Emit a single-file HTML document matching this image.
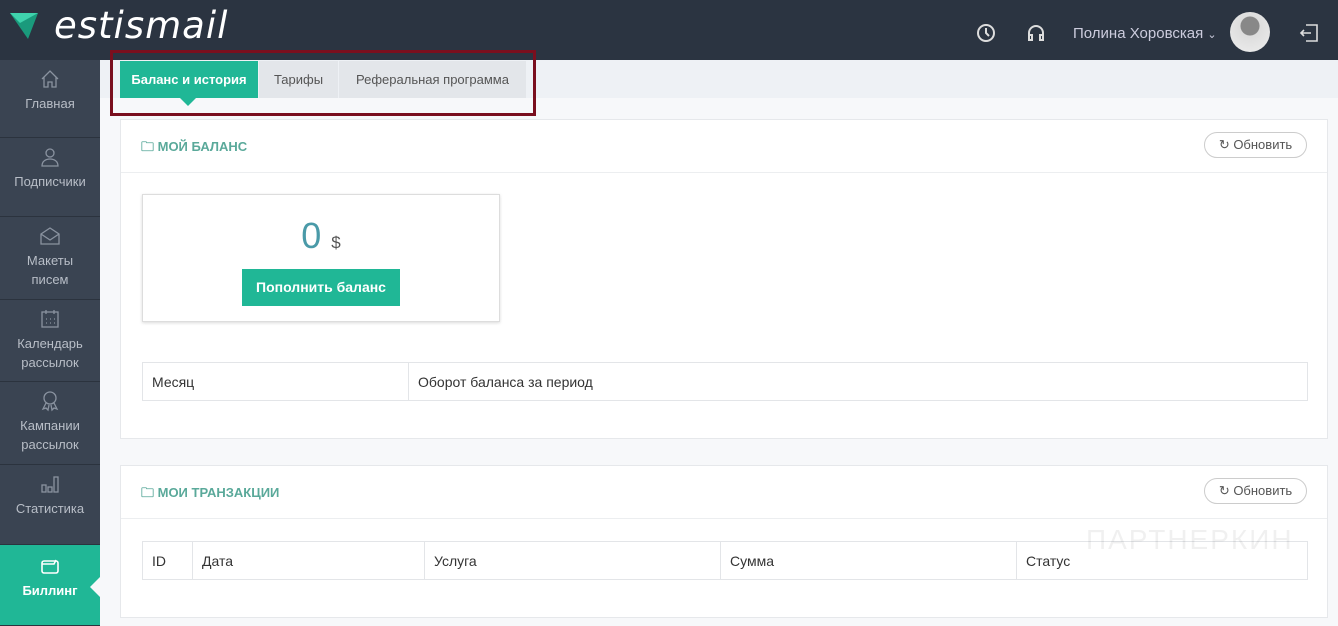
<!DOCTYPE html>
<html><head><meta charset="utf-8"><style>
*{box-sizing:border-box;margin:0;padding:0}
body{width:1338px;height:626px;overflow:hidden;background:#f7f8fa;font-family:"Liberation Sans",sans-serif;position:relative;color:#333}
.hdr{position:absolute;left:0;top:0;width:1338px;height:60px;background:#2b3441}
.logo{position:absolute;left:54px;top:6px;color:#fff;font-size:37px;font-family:"DejaVu Sans",sans-serif;font-style:italic;letter-spacing:1px;line-height:40px}
.side{position:absolute;left:0;top:60px;width:100px;height:566px;background:#3a4452}
.it{position:absolute;left:0;width:100px;border-bottom:1px solid #2b333e;color:#b8bec7;font-size:13px;text-align:center;line-height:19px}
.it svg{display:block;margin:0 auto 4px}
.bill{background:#20b796;color:#fff;font-weight:bold}
.topband{position:absolute;left:100px;top:60px;width:1238px;height:38px;background:#eef1f5}
.tab{position:absolute;top:61px;height:37px;line-height:37px;font-size:13px;text-align:center;background:#e3e6ea;color:#555}
.red{position:absolute;left:110px;top:50px;width:426px;height:66px;border:3px solid #7a0f1e}
.panel{position:absolute;left:120px;width:1208px;background:#fff;border:1px solid #e6e8eb}
.ph{height:53px;border-bottom:1px solid #eceef0;position:relative}
.pt{position:absolute;left:20px;top:18px;color:#5aa99a;font-weight:bold;font-size:13px}
.btn{position:absolute;right:20px;top:12px;width:103px;height:26px;border:1px solid #ccc;border-radius:13px;font-size:13px;color:#555;text-align:center;line-height:24px}
table{position:absolute;border-collapse:collapse;font-size:14px}
td{border:1px solid #e3e5e8;padding:0 9px;height:38px}
</style></head><body>
<div class="hdr">
<svg style="position:absolute;left:10px;top:11px" width="30" height="30"><polygon points="0,2 28,2 18,28" fill="#1a9a7c"/><polygon points="0,2 28,2 10,12" fill="#3fd3ad"/></svg>
<div class="logo">estismail</div>
<svg style="position:absolute;left:976px;top:23px" width="20" height="20" fill="none" stroke="#ddd" stroke-width="2"><circle cx="10" cy="10" r="8"/><path d="M10 5v5l3 3"/></svg>
<svg style="position:absolute;left:1026px;top:23px" width="20" height="20" fill="none" stroke="#ddd" stroke-width="2"><path d="M3 14v-4a7 7 0 0114 0v4M3 12h3v5H3zM14 12h3v5h-3z"/></svg>
<div style="position:absolute;left:1073px;top:25px;color:#ccd;font-size:15px">Полина Хоровская <span style="font-size:11px">⌄</span></div>
<div style="position:absolute;left:1230px;top:12px;width:40px;height:40px;border-radius:50%;background:radial-gradient(circle at 50% 35%,#888 28%,#ddd 30%,#eee)"></div>
<svg style="position:absolute;left:1298px;top:23px" width="22" height="20" fill="none" stroke="#ddd" stroke-width="1.6"><path d="M8 2h11v16H8M3 10h10M6 7l-3 3 3 3"/></svg>
</div>
<div class="side">
<div class="it" style="top:0;height:78px;padding-top:8px"><svg width="22" height="22" fill="none" stroke="#8a93a0" stroke-width="1.3"><path d="M3 11l8-8 8 8M5 9v10h4v-5h4v5h4V9"/></svg>Главная</div>
<div class="it" style="top:78px;height:79px;padding-top:8px"><svg width="22" height="22" fill="none" stroke="#8a93a0" stroke-width="1.3"><circle cx="11" cy="7" r="4"/><path d="M3 20c0-5 4-7 8-7s8 2 8 7z"/></svg>Подписчики</div>
<div class="it" style="top:157px;height:83px;padding-top:8px"><svg width="22" height="22" fill="none" stroke="#8a93a0" stroke-width="1.3"><path d="M2 9l9-6 9 6v10H2zM2 9l9 6 9-6"/></svg>Макеты<br>писем</div>
<div class="it" style="top:240px;height:82px;padding-top:8px"><svg width="22" height="22" fill="none" stroke="#8a93a0" stroke-width="1.3"><rect x="3" y="4" width="16" height="15"/><path d="M7 2v4M15 2v4M7 11h1M11 11h1M15 11h1M7 15h1M11 15h1M15 15h1"/></svg>Календарь<br>рассылок</div>
<div class="it" style="top:322px;height:83px;padding-top:8px"><svg width="22" height="22" fill="none" stroke="#8a93a0" stroke-width="1.3"><circle cx="11" cy="8" r="6"/><path d="M7 13l-3 6 3-1 2 2 1-5M15 13l3 6-3-1-2 2-1-5"/></svg>Кампании<br>рассылок</div>
<div class="it" style="top:405px;height:80px;padding-top:8px"><svg width="22" height="22" fill="none" stroke="#8a93a0" stroke-width="1.3"><rect x="3" y="12" width="4" height="7"/><rect x="9" y="14" width="4" height="5"/><rect x="15" y="4" width="4" height="15"/></svg>Статистика</div>
<div class="it bill" style="top:485px;height:81px;padding-top:10px"><svg width="22" height="22" fill="none" stroke="#fff" stroke-width="1.6"><rect x="3" y="6" width="16" height="12" rx="2"/><path d="M3 9h12l2-4"/></svg>Биллинг</div>
<div style="position:absolute;left:90px;top:517px;border:10px solid transparent;border-right-color:#f7f8fa;border-left:0"></div>
</div>
<div class="topband"></div>
<div class="tab" style="left:120px;width:138px;background:#20b796;color:#fff;font-weight:bold">Баланс и история</div>
<div style="position:absolute;left:180px;top:98px;border:8px solid transparent;border-top-color:#20b796;border-bottom:0"></div>
<div class="tab" style="left:259px;width:79px">Тарифы</div>
<div class="tab" style="left:339px;width:187px">Реферальная программа</div>
<div class="red"></div>
<div class="panel" style="top:119px;height:320px">
<div class="ph"><div class="pt">🗀 МОЙ БАЛАНС</div><div class="btn">↻ Обновить</div></div>
<div style="position:absolute;left:21px;top:74px;width:358px;height:128px;border:1px solid #ddd;box-shadow:0 1px 3px rgba(0,0,0,.15);text-align:center">
<div style="margin-top:20px;font-size:36px;color:#4a9aa8">0 <span style="font-size:17px;color:#555">$</span></div>
<div style="margin:12px auto 0;width:158px;height:37px;background:#20b796;color:#fff;font-size:14px;font-weight:bold;line-height:37px">Пополнить баланс</div>
</div>
<table style="left:21px;top:242px;width:1166px"><tr><td style="width:266px">Месяц</td><td>Оборот баланса за период</td></tr></table>
</div>
<div class="panel" style="top:465px;height:153px">
<div class="ph"><div class="pt">🗀 МОИ ТРАНЗАКЦИИ</div><div class="btn">↻ Обновить</div></div>
<table style="left:21px;top:75px;width:1166px"><tr><td style="width:50px">ID</td><td style="width:232px">Дата</td><td style="width:296px">Услуга</td><td style="width:296px">Сумма</td><td>Статус</td></tr></table>
<div style="position:absolute;left:965px;top:58px;font-size:28px;color:rgba(0,0,0,.06);letter-spacing:2px">ПАРТНЕРКИН</div>
</div>
</body></html>
